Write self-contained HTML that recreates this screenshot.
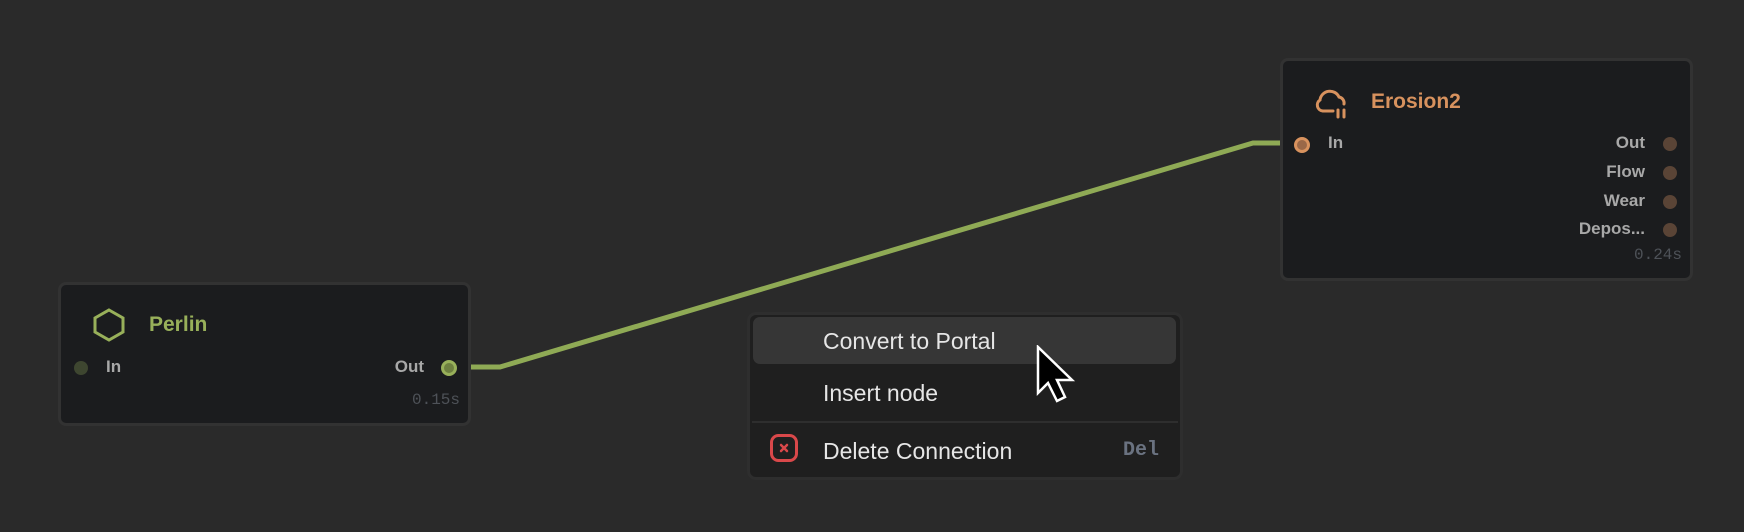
<!DOCTYPE html>
<html><head><style>
body{margin:0;width:1744px;height:532px;background:#2a2a2a;position:relative;overflow:hidden;font-family:"Liberation Sans",sans-serif}
.node{position:absolute;background:#1b1c1e;border:3px solid #323232;border-radius:8px;box-sizing:border-box}
.t{position:absolute;white-space:nowrap}
.lbl{font-size:17px;color:#a8a8a8;font-weight:bold}
.port{position:absolute;width:14px;height:14px;border-radius:50%}
.mono{font-family:"Liberation Mono",monospace}
</style></head><body>
<svg width="1744" height="532" style="position:absolute;left:0;top:0">
<polyline points="470,367 500,367 1253,143 1290,143" fill="none" stroke="#8faa55" stroke-width="5"/>
</svg>

<div class="node" style="left:58px;top:282px;width:413px;height:144px"></div>
<svg style="position:absolute;left:92px;top:307px" width="34" height="36"><polygon points="17,3 31,11 31,25 17,33 3,25 3,11" fill="none" stroke="#98b05a" stroke-width="3"/></svg>
<div class="t" style="left:149px;top:313px;font-size:21px;font-weight:bold;color:#98b05a">Perlin</div>
<div class="port" style="left:74px;top:361px;background:#3e4630"></div>
<div class="t lbl" style="left:106px;top:357px">In</div>
<div class="t lbl" style="right:1320px;top:357px">Out</div>
<div class="port" style="left:441px;top:360px;width:10px;height:10px;border:3px solid #98b05a;background:#6e8040"></div>
<div class="t mono" style="right:1284px;top:391px;font-size:16px;color:#4e5258">0.15s</div>

<div class="node" style="left:1280px;top:58px;width:413px;height:223px"></div>
<svg style="position:absolute;left:1314px;top:88px" width="34" height="32"><path d="M12,23 H9 A6,6 0 0 1 6,12 A10,10 0 0 1 25,9 A6,6 0 0 1 30,16" fill="none" stroke="#d8925e" stroke-width="3" stroke-linecap="round"/><path d="M9,23 H19" stroke="#d8925e" stroke-width="3" stroke-linecap="round" fill="none"/><path d="M24,22 V29 M30,22 V29" stroke="#d8925e" stroke-width="3" stroke-linecap="round"/></svg>
<div class="t" style="left:1371px;top:90px;font-size:21px;font-weight:bold;color:#d8925e">Erosion2</div>
<div class="port" style="left:1294px;top:137px;width:10px;height:10px;border:3px solid #d8925e;background:#9a6848"></div>
<div class="t lbl" style="left:1328px;top:133px">In</div>
<div class="t lbl" style="right:99px;top:133px">Out</div>
<div class="t lbl" style="right:99px;top:162px">Flow</div>
<div class="t lbl" style="right:99px;top:191px">Wear</div>
<div class="t lbl" style="right:99px;top:219px">Depos...</div>
<div class="port" style="left:1663px;top:137px;background:#5a4436"></div>
<div class="port" style="left:1663px;top:166px;background:#5a4436"></div>
<div class="port" style="left:1663px;top:195px;background:#5a4436"></div>
<div class="port" style="left:1663px;top:223px;background:#5a4436"></div>
<div class="t mono" style="right:62px;top:246px;font-size:16px;color:#4e5258">0.24s</div>

<div style="position:absolute;left:747px;top:312px;width:436px;height:168px;background:#1f1f1f;border:3px solid #2e2e2e;border-radius:9px;box-sizing:border-box"></div>
<div style="position:absolute;left:753px;top:317px;width:423px;height:47px;background:#363636;border-radius:7px"></div>
<div class="t" style="left:823px;top:328px;font-size:23px;color:#e6e6e6">Convert to Portal</div>
<div class="t" style="left:823px;top:380px;font-size:23px;color:#e6e6e6">Insert node</div>
<div style="position:absolute;left:752px;top:421px;width:426px;height:2px;background:#2e2e2e"></div>
<svg style="position:absolute;left:769px;top:433px" width="32" height="32"><rect x="2.5" y="2.5" width="25" height="25" rx="7" fill="none" stroke="#d9484a" stroke-width="3"/><path d="M12,12 L18,18 M18,12 L12,18" stroke="#d9484a" stroke-width="2.5" stroke-linecap="round"/></svg>
<div class="t" style="left:823px;top:438px;font-size:23px;color:#e6e6e6">Delete Connection</div>
<div class="t mono" style="right:585px;top:439px;font-size:20px;color:#6a7280;font-weight:bold">Del</div>

<svg style="position:absolute;left:1036px;top:345px" width="46" height="62"><path d="M2,2 L2,48 L12,38 L21,56 L29,52 L21,35 L36,35 Z" fill="#000" stroke="#fff" stroke-width="2.5" stroke-linejoin="miter"/></svg>
</body></html>
